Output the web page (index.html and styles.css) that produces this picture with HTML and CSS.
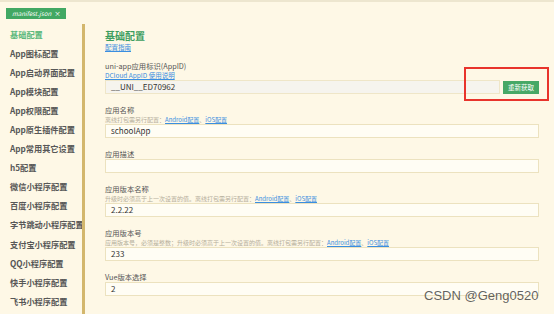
FILE: index.html
```html
<!DOCTYPE html>
<html lang="zh">
<head>
<meta charset="utf-8">
<title>manifest.json</title>
<link rel="stylesheet" href="styles.css">
</head>
<body>
<div class="page">
  <div class="topline"></div>
  <div class="tabbar">
    <span class="tab">manifest.json<span class="tab-x">×</span></span>
  </div>
  <div class="layout">
    <nav class="sidebar">
      <div class="nav-item active">基础配置</div>
      <div class="nav-item">App图标配置</div>
      <div class="nav-item">App启动界面配置</div>
      <div class="nav-item">App模块配置</div>
      <div class="nav-item">App权限配置</div>
      <div class="nav-item">App原生插件配置</div>
      <div class="nav-item">App常用其它设置</div>
      <div class="nav-item">h5配置</div>
      <div class="nav-item">微信小程序配置</div>
      <div class="nav-item">百度小程序配置</div>
      <div class="nav-item">字节跳动小程序配置</div>
      <div class="nav-item">支付宝小程序配置</div>
      <div class="nav-item">QQ小程序配置</div>
      <div class="nav-item">快手小程序配置</div>
      <div class="nav-item">飞书小程序配置</div>
    </nav>
    <div class="divider"></div>
    <main class="main">
      <h1 class="title">基础配置</h1>
      <a class="link guide">配置指南</a>

      <div class="field first">
        <div class="label">uni-app应用标识(AppID)</div>
        <a class="link sub">DCloud AppID 使用说明</a>
        <div class="input-row">
          <div class="input disabled">__UNI__ED70962</div>
          <button class="btn">重新获取</button>
        </div>
      </div>

      <div class="field">
        <div class="label">应用名称</div>
        <div class="hint">离线打包需另行配置：<a class="link">Android配置</a>、<a class="link">iOS配置</a></div>
        <div class="input">schoolApp</div>
      </div>

      <div class="field">
        <div class="label">应用描述</div>
        <div class="input"></div>
      </div>

      <div class="field">
        <div class="label">应用版本名称</div>
        <div class="hint">升级时必须高于上一次设置的值。离线打包需另行配置：<a class="link">Android配置</a>、<a class="link">iOS配置</a></div>
        <div class="input">2.2.22</div>
      </div>

      <div class="field">
        <div class="label">应用版本号</div>
        <div class="hint">应用版本号，必须是整数；升级时必须高于上一次设置的值。离线打包需另行配置：<a class="link">Android配置</a>、<a class="link">iOS配置</a></div>
        <div class="input">233</div>
      </div>

      <div class="field">
        <div class="label">Vue版本选择</div>
        <div class="input">2</div>
      </div>
    </main>
  </div>
  <div class="highlight"></div>
  <div class="watermark">CSDN @Geng0520</div>
</div>
</body>
</html>
```

FILE: styles.css
```css
* { box-sizing: border-box; }
html, body {
  margin: 0;
  padding: 0;
  background: #fef8e6;
}
body {
  font-family: "Noto Sans CJK SC", "Noto Sans", sans-serif;
  color: #555;
  overflow: hidden;
}
.page {
  position: relative;
  width: 554px;
  height: 314px;
  overflow: hidden;
}
.topline {
  height: 2px;
  background: #ede6cf;
}
.tabbar {
  display: flex;
  align-items: flex-start;
  height: 22px;
  padding: 6px 0 0 6px;
}
.tab {
  display: flex;
  align-items: center;
  height: 11px;
  padding: 0 5px 0 6px;
  background: #41a863;
  color: #fff;
  font-style: italic;
  font-size: 6.2px;
  line-height: 11px;
  white-space: nowrap;
}
.tab-x {
  font-style: normal;
  margin-left: 3px;
  font-size: 6.5px;
}
.layout {
  display: flex;
  height: 290px;
}
.sidebar {
  width: 82px;
  flex: none;
  padding: 0.5px 0 0 10px;
}
.nav-item {
  height: 19.1px;
  line-height: 19.1px;
  font-size: 8.2px;
  font-weight: 700;
  color: #575757;
  white-space: nowrap;
}
.nav-item.active {
  color: #5cb97c;
}
.divider {
  width: 3px;
  flex: none;
  background: #d3b76d;
}
.main {
  flex: 1;
  padding: 6px 15px 0 20px;
}
.title {
  margin: 0;
  font-size: 10px;
  line-height: 12px;
  font-weight: 700;
  color: #3c9d5e;
}
.link {
  color: #3a8ee0;
  text-decoration: underline;
}
.guide {
  display: block;
  margin-top: 1px;
  font-size: 6.5px;
  line-height: 9px;
}
.field {
  margin-top: 12px;
}
.field.first {
  margin-top: 10px;
}
.label {
  font-size: 7.3px;
  line-height: 9px;
  color: #555;
  white-space: nowrap;
}
.sub {
  display: block;
  font-size: 6.5px;
  line-height: 9px;
  white-space: nowrap;
}
.hint {
  font-size: 6px;
  line-height: 9px;
  color: #b5ae9c;
  white-space: nowrap;
}
.input-row {
  display: flex;
  align-items: center;
  gap: 3px;
}
.input {
  height: 14px;
  border: 1px solid #ece2bf;
  background: #fffdf4;
  padding-left: 5px;
  font-size: 8px;
  line-height: 12px;
  color: #333;
}
.input.disabled {
  flex: 1;
  background: #f6f4ee;
  border-color: #efe6c8;
}
.btn {
  flex: none;
  width: 36px;
  height: 13px;
  padding: 0;
  border: 0;
  background: #47a866;
  color: #fff;
  font-family: "Noto Sans CJK SC", sans-serif;
  font-size: 6.5px;
  line-height: 13px;
}
.highlight {
  position: absolute;
  left: 464px;
  top: 67px;
  width: 85px;
  height: 34px;
  border: 2px solid #e8342c;
}
.watermark {
  position: absolute;
  left: 424px;
  top: 288px;
  font-family: "Liberation Sans", Arial, sans-serif;
  font-size: 13px;
  line-height: 16px;
  color: rgba(70, 70, 70, 0.85);
  white-space: nowrap;
}
```
